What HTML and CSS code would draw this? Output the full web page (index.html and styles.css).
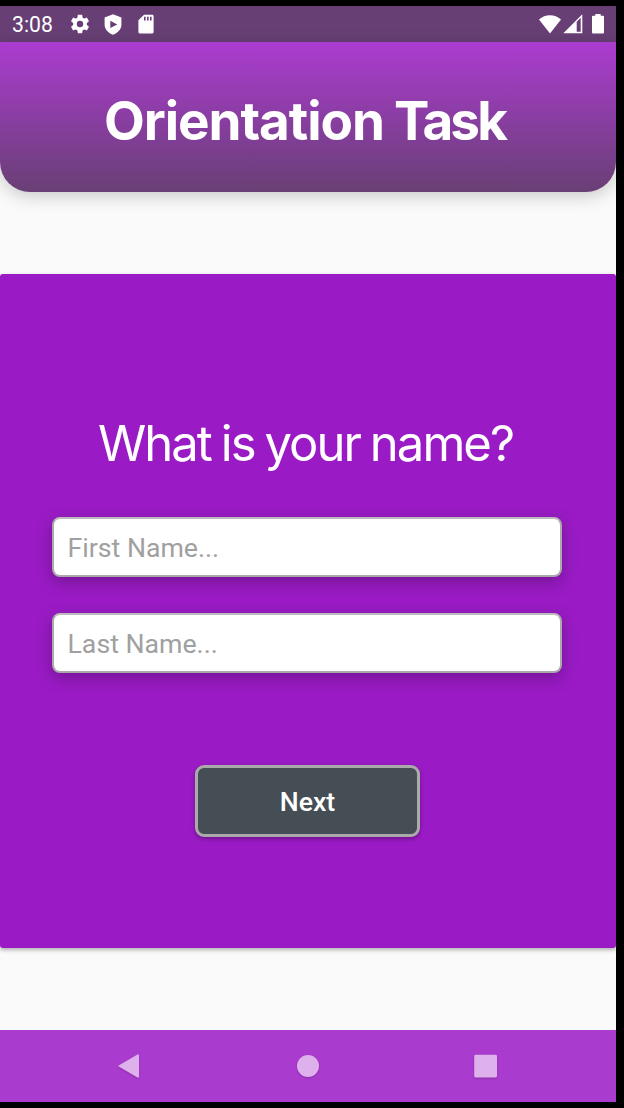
FILE: index.html
```html
<!DOCTYPE html>
<html lang="en">
<head>
<meta charset="utf-8">
<title>Orientation Task</title>
<link rel="stylesheet" href="styles.css">
</head>
<body>
<div class="screen">
  <div class="status-bar">
    <span class="clock">3:08</span>
    <svg class="settings-icon" width="22" height="22" viewBox="0 0 24 24"><path d="M19.43 12.98c.04-.32.07-.64.07-.98s-.03-.66-.07-.98l2.11-1.65c.19-.15.24-.42.12-.64l-2-3.46c-.12-.22-.39-.3-.61-.22l-2.49 1c-.52-.4-1.08-.73-1.69-.98l-.38-2.65A.49.49 0 0 0 14 2h-4c-.25 0-.46.18-.49.42l-.38 2.65c-.61.25-1.17.59-1.69.98l-2.49-1c-.23-.09-.49 0-.61.22l-2 3.46c-.13.22-.07.49.12.64l2.11 1.65c-.04.32-.07.65-.07.98s.03.66.07.98l-2.11 1.65c-.19.15-.24.42-.12.64l2 3.46c.12.22.39.3.61.22l2.49-1c.52.4 1.08.73 1.69.98l.38 2.65c.03.24.24.42.49.42h4c.25 0 .46-.18.49-.42l.38-2.65c.61-.25 1.17-.59 1.69-.98l2.49 1c.23.09.49 0 .61-.22l2-3.46c.12-.22.07-.49-.12-.64l-2.11-1.65zM12 15.5a3.5 3.5 0 1 1 0-7 3.5 3.5 0 0 1 0 7z"/></svg>
    <svg class="shield-icon" width="18" height="21" viewBox="0 0 18 21"><path fill-rule="evenodd" d="M9 .3l8.400 3.100v7.100c0 4.600-3.100 8.200-8.400 10.200C3.700 18.700.6 15.100.6 10.500V3.400zM6.300 6.700v7.400l7-3.700z"/></svg>
    <svg class="card-icon" width="16" height="20" viewBox="0 0 16 20"><path fill-rule="evenodd" d="M6 .8h8.200c.8 0 1.400.6 1.400 1.400v15.800c0 .8-.6 1.400-1.400 1.400H1.800c-.8 0-1.400-.6-1.400-1.400V6.300zM6 2.800v3.800h1.600V2.800zM9 2.800v3.800h1.600V2.800zM12 2.800v3.800h1.600V2.800z"/></svg>
    <svg class="wifi-icon" width="22" height="19" viewBox="0 0 22 19"><path d="M0 4.600C6-1.200 16-1.200 22 4.600L11 18.600z"/></svg>
    <svg class="signal-icon" width="20" height="20" viewBox="0 0 20 20"><path fill-rule="evenodd" d="M.3 19.300L19.300.3v19zM13.700 7.800v9.900h4V3.800z"/></svg>
    <svg class="battery-icon" width="12" height="20" viewBox="0 0 12 20"><path d="M3.300 0h5.400v1.800H11a1 1 0 0 1 1 1v15.700a1 1 0 0 1-1 1H1a1 1 0 0 1-1-1V2.800a1 1 0 0 1 1-1h2.300z"/></svg>
  </div>
  <header class="header"><h1 class="title">Orientation <span class="title-tight">Task</span></h1></header>
  <main class="content">
    <form class="card">
      <h2 class="question">What is your name?</h2>
      <input class="field" type="text" placeholder="First Name..." aria-label="First name">
      <input class="field" type="text" placeholder="Last Name..." aria-label="Last name">
      <button class="next" type="button">Next</button>
    </form>
  </main>
  <nav class="nav-bar">
    <svg width="24" height="28" viewBox="0 0 24 28"><path d="M1.700 13.400L20.500 2.600q1.500-.8 1.500.9v21q0 1.700-1.500.9L1.700 14.600q-1-.6 0-1.200z"/></svg>
    <svg width="24" height="28" viewBox="0 0 24 28"><circle cx="12" cy="14" r="11"/></svg>
    <svg width="24" height="28" viewBox="0 0 24 28"><rect x=".2" y="2.800" width="22.800" height="22.600" rx="1.300"/></svg>
  </nav>
</div>
</body>
</html>
```
FILE: styles.css
```css
* {
  box-sizing: border-box;
}

body {
  margin: 0;
  padding: 6px 8px 6px 0;
  height: 1108px;
  background: #000;
  font-family: Roboto, sans-serif;
}

.screen {
  display: flex;
  flex-direction: column;
  width: 616px;
  height: 1096px;
  overflow: hidden;
  background: #fafafa;
}

.status-bar {
  display: flex;
  align-items: center;
  flex: none;
  height: 36px;
  padding: 0 12px;
  background: #673f74;
  color: #fff;
  fill: #fff;
}

.clock {
  width: 57px;
  font-size: 21.200px;
  line-height: 36px;
  padding-top: 2px;
}

.shield-icon {
  margin-left: 13px;
}

.card-icon {
  margin-left: 16px;
}

.wifi-icon {
  margin-left: auto;
}

.signal-icon {
  margin-left: 2px;
}

.battery-icon {
  margin-left: 9px;
}

.header {
  flex: none;
  height: 150px;
  border-radius: 0 0 30px 30px;
  background: linear-gradient(#ab3cd0, #693f75);
  box-shadow: 0 4px 18px rgba(0, 0, 0, 0.2);
}

.title {
  margin: 0;
  padding-right: 7px;
  font: 700 53px/158px Inter, sans-serif;
  letter-spacing: -1.050px;
  word-spacing: -1.500px;
  text-align: center;
  color: #fff;
}

.title-tight {
  letter-spacing: -2.900px;
}

.content {
  flex: 1;
  padding-top: 82px;
}

.card {
  display: flex;
  flex-direction: column;
  align-items: center;
  height: 674px;
  padding: 136px 2px 0 0;
  border-radius: 3px;
  background: #9a1bc5;
  box-shadow: 0 2px 4px rgba(0, 0, 0, 0.3);
}

.question {
  margin: 0 0 39px;
  padding-right: 3px;
  font: 400 49px/68px Inter, sans-serif;
  letter-spacing: -1.950px;
  word-spacing: -2px;
  color: #fff;
}

.field {
  width: 510px;
  height: 60px;
  margin: 0 0 36px;
  padding: 3px 13.500px 1px;
  border: 2px solid #aaa;
  border-top-color: #bbb;
  border-radius: 8px;
  background: #fff;
  box-shadow: 0 5px 16px rgba(0, 0, 0, 0.26);
  font: 400 26.700px Roboto, sans-serif;
}

.field::placeholder {
  color: #a0a0a0;
}

.next {
  width: 225px;
  height: 72px;
  margin-top: 56px;
  padding: 2px 0 0 1px;
  border: 3px solid #aaa;
  border-radius: 9px;
  background: #464e55;
  box-shadow: 0 2px 4px rgba(0, 0, 0, 0.3);
  font: 500 26.700px Roboto, sans-serif;
  color: #fff;
}

.nav-bar {
  display: flex;
  align-items: center;
  justify-content: space-between;
  flex: none;
  height: 72px;
  padding: 0 118px 0 117px;
  background: #aa3bcf;
  fill: #deb0ec;
}

.nav-bar svg {
  filter: drop-shadow(0 1px 1px rgba(0, 0, 0, 0.2));
}
```
